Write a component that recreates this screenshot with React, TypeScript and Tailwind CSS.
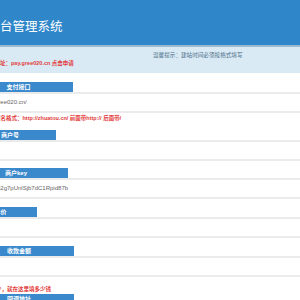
import React from 'react';

const FONT = "font-['Liberation_Sans','Noto_Sans_CJK_SC',sans-serif]";

function Bar({ label, width }: { label: string; width: string }) {
  return (
    <div className="border-b-2 border-[#ebebeb]">
      <div className={`-ml-[36px] h-[10px] ${width} bg-[#3a89cc] text-white text-[6px] font-bold leading-[10px] text-center`}>
        {label}
      </div>
    </div>
  );
}

function Field({ children }: { children?: React.ReactNode }) {
  return (
    <div className="h-[19px] border-b-2 border-[#ebebeb] flex items-center text-[6px] text-[#666] whitespace-nowrap overflow-hidden">
      {children}
    </div>
  );
}

export default function App() {
  return (
    <div className={`w-[300px] h-[300px] overflow-hidden bg-white ${FONT}`}>
      {/* header */}
      <div className="h-[47px] bg-[#2f87c9] border-b-2 border-[#9dbbd0] pt-[20px]">
        <div className="-ml-[12.5px] text-white text-[12.5px] leading-[14px] whitespace-nowrap">后台管理系统</div>
      </div>

      {/* notice band */}
      <div className="h-[26px] bg-[#d9eaf5] pt-[4px]">
        <div className="pl-[153px] h-[8px] leading-[8px] text-[5.6px] text-[#4d6f88] whitespace-nowrap">
          温馨提示：建站时间必须按格式填写
        </div>
        <div className="-ml-[16.5px] h-[8px] leading-[8px] text-[5.5px] font-bold text-[#e23b3b] whitespace-nowrap">
          申请地址：pay.gree020.cn 点击申请
        </div>
      </div>

      <div className="pt-[9px]">
        <Bar label="支付接口" width="w-[109px]" />
        <Field>
          <span className="-ml-[20px]">http://gree020.cn/</span>
        </Field>
        <div className="h-[8px] mt-[1px] leading-[8px] text-[5.5px] font-bold text-[#e23b3b] whitespace-nowrap -ml-[5px]">
          域名格式：http://zhuatou.cn/ 前面带http:// 后面带/
        </div>

        <div className="mt-[8px]">
          <Bar label="商户号" width="w-[92px]" />
          <Field />
        </div>

        <div className="mt-[7px]">
          <Bar label="商户key" width="w-[104px]" />
          <Field>
            <span className="-ml-[3px]">a2g7pUnlSjb7dC1Rpid87b</span>
          </Field>
        </div>

        <div className="mt-[8px]">
          <Bar label="单价" width="w-[73px]" />
          <Field />
        </div>

        <div className="mt-[8px]">
          <Bar label="收款金额" width="w-[110px]" />
          <Field />
        </div>

        <div className="mt-[8px] h-[8px] leading-[8px] text-[5.5px] font-bold text-[#e23b3b] whitespace-nowrap -ml-[20.5px]">
          充值多少，就在这里填多少钱
        </div>
        <div className="mt-[1px]">
          <Bar label="回调地址" width="w-[110px]" />
          <Field />
        </div>
      </div>
    </div>
  );
}
